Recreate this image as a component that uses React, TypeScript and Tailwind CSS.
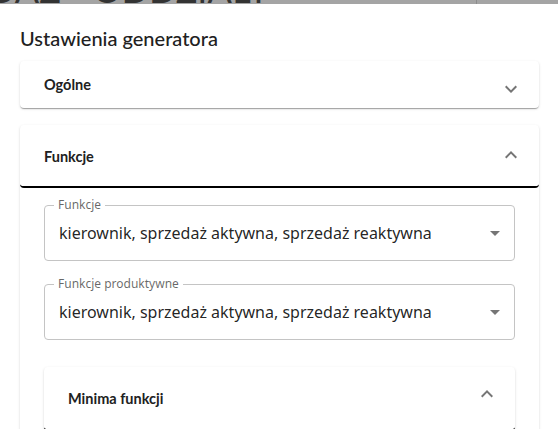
import React from "react";

const ExpandMore = () => (
  <svg width="24" height="24" viewBox="0 0 24 24" className="fill-[rgba(0,0,0,0.54)]">
    <path d="M16.59 8.59 12 13.17 7.41 8.59 6 10l6 6 6-6z" />
  </svg>
);

const ExpandLess = () => (
  <svg width="24" height="24" viewBox="0 0 24 24" className="fill-[rgba(0,0,0,0.54)]">
    <path d="m12 8-6 6 1.41 1.41L12 10.83l4.59 4.58L18 14z" />
  </svg>
);

const ArrowDrop = () => (
  <svg width="24" height="24" viewBox="0 0 24 24" className="fill-[rgba(0,0,0,0.54)]">
    <path d="M7 10l5 5 5-5z" />
  </svg>
);

const shadow =
  "shadow-[0px_2px_1px_-1px_rgba(0,0,0,0.2),0px_1px_1px_0px_rgba(0,0,0,0.14),0px_1px_3px_0px_rgba(0,0,0,0.12)]";

function SelectField({ label, value }: { label: string; value: string }) {
  return (
    <div className="relative h-[56px] rounded-[4px] border border-[#c4c4c4] flex items-center pl-[14px] pr-[7px]">
      <span className="absolute -top-[9px] left-[9px] px-[4px] bg-white text-[12px] leading-[16px] text-[rgba(0,0,0,0.6)] font-['Noto_Sans',sans-serif]">
        {label}
      </span>
      <span className="flex-1 text-[16px] text-[rgba(0,0,0,0.87)] font-['Noto_Sans',sans-serif] whitespace-nowrap">
        {value}
      </span>
      <ArrowDrop />
    </div>
  );
}

export default function App() {
  const val = "kierownik, sprzedaż aktywna, sprzedaż reaktywna";
  return (
    <div className="w-[558px] h-[429px] overflow-hidden bg-white font-['Lato',sans-serif]">
      <div className="h-[4px] bg-[#a4a4a4] overflow-hidden flex items-start">
        <div className="-mt-[29px] -ml-[118px] text-[36px] leading-none text-[#333] whitespace-nowrap w-[594px] shrink-0">
          SPRZEDAŻ - ODDZIAŁY
        </div>
        <div className="w-[1px] h-[4px] bg-[#8c8c8c] shrink-0" />
      </div>
      <div className="pl-[20px] pt-[20px]">
        <h1 className="text-[20px] leading-[28px] font-medium text-[#212121]">Ustawienia generatora</h1>
        <div className={`mt-[9px] w-[519px] h-[47px] rounded-[4px] bg-white ${shadow} flex items-center justify-between pl-[24px] pr-[16px]`}>
          <span className="text-[14.5px] font-bold text-[#212121]">Ogólne</span>
          <span className="mt-[8px]"><ExpandMore /></span>
        </div>
        <div className={`mt-[17px] w-[519px] rounded-[4px] bg-white ${shadow}`}>
          <div className="h-[63px] flex items-center justify-between pl-[24px] pr-[16px] border-b-2 border-black rounded-b-[4px]">
            <span className="text-[14.5px] font-bold text-[#212121] mt-[2px]">Funkcje</span>
            <span className="-mt-[2px]"><ExpandLess /></span>
          </div>
          <div className="px-[24px] pt-[17px] pb-[16px]">
            <SelectField label="Funkcje" value={val} />
            <div className="mt-[23px]">
              <SelectField label="Funkcje produktywne" value={val} />
            </div>
            <div className={`mt-[27px] rounded-[4px] bg-white ${shadow}`}>
              <div className="h-[64px] flex items-center justify-between pl-[24px] pr-[16px] border-b-2 border-black rounded-b-[4px]">
                <span className="text-[14.5px] font-bold text-[#212121] mt-[2px]">Minima funkcji</span>
                <span className="-mt-[8px]"><ExpandLess /></span>
              </div>
              <div className="h-[40px]" />
            </div>
          </div>
        </div>
      </div>
    </div>
  );
}
